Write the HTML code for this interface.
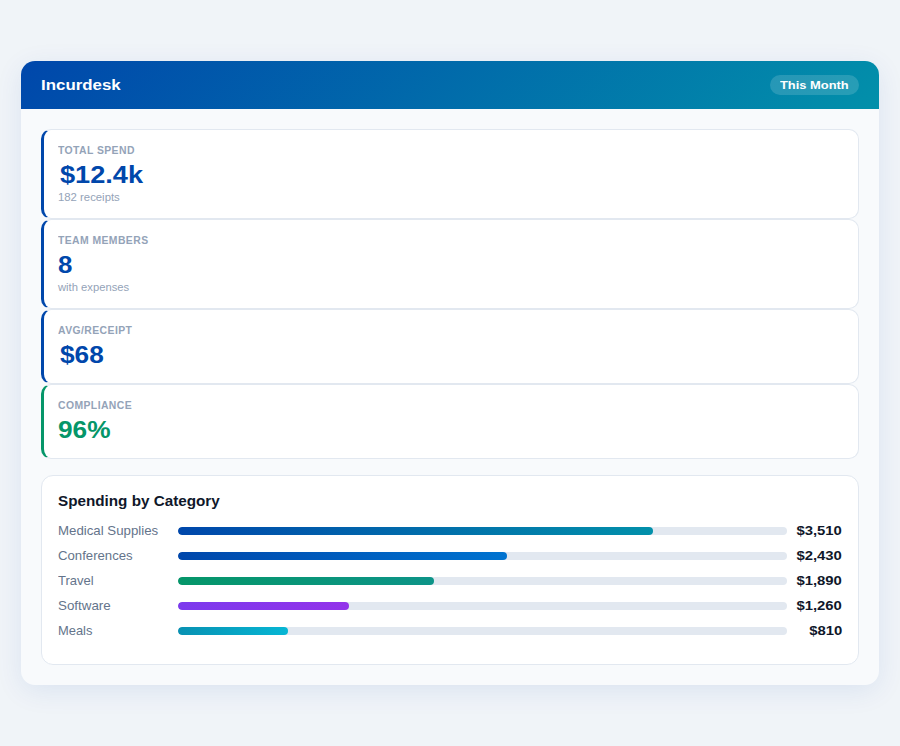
<!DOCTYPE html>
<html><head><meta charset="utf-8">
<style>
*{box-sizing:border-box;margin:0;padding:0}
html,body{width:900px;height:746px;overflow:hidden}
body{background:#f0f4f8;font-family:"Liberation Sans",sans-serif;position:relative}
.t{display:inline-block;transform-origin:0 50%;position:relative;white-space:nowrap}
.tr0{transform-origin:100% 50%}
.card{position:absolute;left:21px;top:61px;width:858px;height:624px;border-radius:14px;background:#f8fafc;overflow:hidden;box-shadow:0 6px 28px rgba(0,71,171,0.09)}
.hdr{height:48px;background:linear-gradient(135deg,#0047ab 0%,#0290aa 100%);display:flex;align-items:center;justify-content:space-between;padding:0 20px}
.brand{color:#fff;font-weight:700;font-size:14.84px;padding-top:1px;line-height:17px}
.brand .t{transform:scaleX(1.138);top:0}
.pill{height:20px;padding:0 10px;border-radius:10px;background:rgba(255,255,255,0.15);color:#fff;font-size:11.66px;font-weight:700;line-height:21px;width:89px}
.pill .t{transform:scaleX(1.106);top:-1px}
.body{padding:20px}
.stat{background:#fff;border:1px solid #e2e8f0;border-left:3px solid #0047ab;border-radius:10px;padding:15px 14px 0;height:90px}
.stat.s{height:75px}
.stat.g{border-left-color:#059669}
.lab{font-size:10px;font-weight:700;color:#94a3b8;line-height:10.5px}
.lab .t{transform:scaleX(1.04);letter-spacing:0.4px;top:0.5px}
.val{font-size:23.32px;font-weight:700;color:#0047ab;line-height:25.6px;margin-top:7px}
.val .t{top:0}
.g .val{color:#059669}
.sub{font-size:10.6px;color:#94a3b8;line-height:11.6px;margin-top:4px}
.sub .t{top:0}
.cat{margin-top:16px;background:#fff;border:1px solid #e2e8f0;border-radius:12px;padding:17px 16px 16px;height:190px}
.ttl{font-size:13.78px;font-weight:700;color:#0f172a;line-height:16px;margin-bottom:13px}
.ttl .t{top:0.5px;transform:scaleX(1.107)}
.row{display:flex;align-items:center;height:17px;margin-bottom:8px}
.rl{width:120px;font-size:12.72px;color:#64748b}
.trk{flex:1;height:8px;border-radius:4px;background:#e2e8f0;overflow:hidden}
.fi{height:8px;border-radius:4px}
.rv{width:55px;text-align:right;font-size:12.72px;font-weight:700;color:#0f172a}
.rv .t{transform:scaleX(1.17);transform-origin:100% 50%}
</style></head><body>
<div class="card">
 <div class="hdr"><div class="brand"><span class="t">Incurdesk</span></div><div class="pill"><span class="t">This Month</span></div></div>
 <div class="body">
  <div class="stat"><div class="lab"><span class="t">TOTAL SPEND</span></div><div class="val"><span class="t" style="transform:scaleX(1.165);left:1.5px">$12.4k</span></div><div class="sub"><span class="t" style="transform:scaleX(1.07)">182 receipts</span></div></div>
  <div class="stat"><div class="lab"><span class="t">TEAM MEMBERS</span></div><div class="val"><span class="t" style="transform:scaleX(1.109)">8</span></div><div class="sub"><span class="t" style="transform:scaleX(1.06)">with expenses</span></div></div>
  <div class="stat s"><div class="lab"><span class="t">AVG/RECEIPT</span></div><div class="val"><span class="t" style="transform:scaleX(1.125);left:1.5px">$68</span></div></div>
  <div class="stat s g"><div class="lab"><span class="t">COMPLIANCE</span></div><div class="val"><span class="t" style="transform:scaleX(1.127)">96%</span></div></div>
  <div class="cat">
   <div class="ttl"><span class="t">Spending by Category</span></div>
   <div class="row"><div class="rl"><span class="t" style="transform:scaleX(1.042)">Medical Supplies</span></div><div class="trk"><div class="fi" style="width:78%;background:linear-gradient(90deg,#0047ab,#0290aa)"></div></div><div class="rv"><span class="t">$3,510</span></div></div>
   <div class="row"><div class="rl"><span class="t" style="transform:scaleX(1.035)">Conferences</span></div><div class="trk"><div class="fi" style="width:54%;background:linear-gradient(90deg,#0047ab,#0073d0)"></div></div><div class="rv"><span class="t">$2,430</span></div></div>
   <div class="row"><div class="rl"><span class="t" style="transform:scaleX(1.022)">Travel</span></div><div class="trk"><div class="fi" style="width:42%;background:linear-gradient(90deg,#059669,#0d9488)"></div></div><div class="rv"><span class="t">$1,890</span></div></div>
   <div class="row"><div class="rl"><span class="t" style="transform:scaleX(1.051)">Software</span></div><div class="trk"><div class="fi" style="width:28%;background:linear-gradient(90deg,#7c3aed,#9333ea)"></div></div><div class="rv"><span class="t">$1,260</span></div></div>
   <div class="row"><div class="rl"><span class="t" style="transform:scaleX(1.015)">Meals</span></div><div class="trk"><div class="fi" style="width:18%;background:linear-gradient(90deg,#0891b2,#06b6d4)"></div></div><div class="rv"><span class="t">$810</span></div></div>
  </div>
 </div>
</div>
</body></html>
